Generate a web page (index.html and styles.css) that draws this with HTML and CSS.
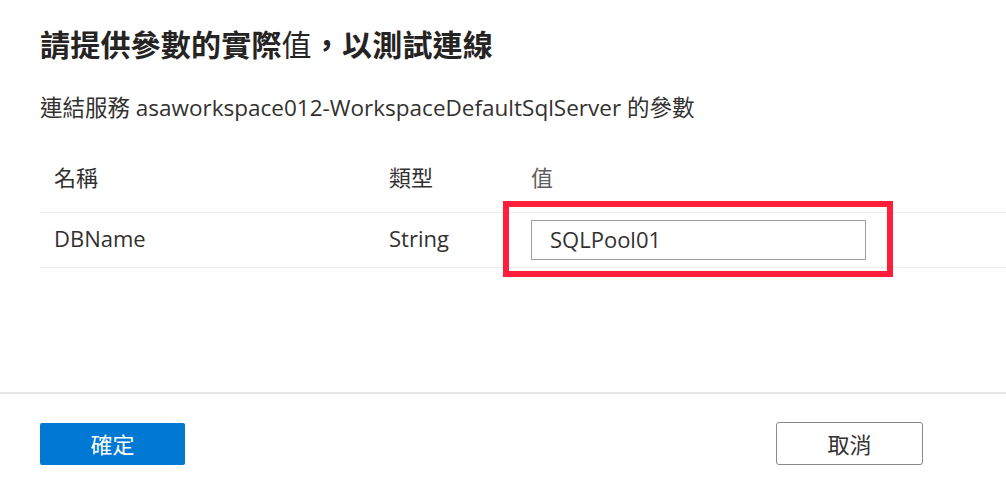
FILE: index.html
```html
<!DOCTYPE html>
<html lang="zh-Hant">
<head>
<meta charset="utf-8">
<title>參數</title>
<link rel="stylesheet" href="styles.css">
</head>
<body>
<div class="page">
  <main class="main">
    <h1 class="title">請提供參數的實際<span class="serif">值</span>，以測試連線</h1>
    <p class="subtitle">連結服務 asaworkspace012-WorkspaceDefaultSqlServer 的參數</p>
    <div class="table">
      <div class="row head">
        <div class="cell name">名稱</div>
        <div class="cell type">類型</div>
        <div class="cell value serif light">值</div>
      </div>
      <div class="row data">
        <div class="cell name text">DBName</div>
        <div class="cell type text">String</div>
        <div class="cell value"><div class="input">SQLPool01</div></div>
        <div class="highlight"></div>
      </div>
    </div>
  </main>
  <footer class="footer">
    <button class="btn primary">確定</button>
    <button class="btn secondary">取消</button>
  </footer>
</div>
</body>
</html>
```
FILE: styles.css
```css
html, body {
  margin: 0;
  padding: 0;
  background: #ffffff;
}
body {
  font-family: "Open Sans", "Noto Sans CJK TC", sans-serif;
  color: #323130;
}
.page {
  width: 1006px;
  height: 483px;
  display: flex;
  flex-direction: column;
  overflow: hidden;
}
.main {
  height: 392px;
  display: flex;
  flex-direction: column;
  padding: 23px 0 0 40px;
  box-sizing: border-box;
}
.title {
  margin: 0;
  font-family: "Noto Sans CJK TC", sans-serif;
  font-size: 30px;
  line-height: 40px;
  font-weight: 700;
  letter-spacing: 0.2px;
  color: #252423;
}
.title .serif {
  font-weight: 400;
}
.subtitle {
  margin: 30px 0 0 0;
  font-size: 22.5px;
  line-height: 30px;
  color: #323130;
}
.table {
  margin-top: 21px;
  display: flex;
  flex-direction: column;
}
.row {
  display: grid;
  grid-template-columns: 349px 142px 1fr;
  align-items: center;
  font-size: 22px;
}
.row.head {
  height: 68px;
  padding-bottom: 5px;
  box-sizing: border-box;
}
.row.data {
  position: relative;
  height: 56px;
  border-top: 1px solid #edebe9;
  border-bottom: 1px solid #edebe9;
  box-sizing: border-box;
}
.row.data .text {
  padding-bottom: 5px;
}
.cell.name {
  padding-left: 14px;
}
.light {
  color: #605e5c;
}
.input {
  width: 335px;
  height: 40px;
  box-sizing: border-box;
  border: 1px solid #a19f9d;
  padding-left: 18px;
  padding-bottom: 2px;
  display: flex;
  align-items: center;
  font-size: 22px;
  color: #323130;
}
.highlight {
  position: absolute;
  left: 463px;
  top: -12px;
  width: 390px;
  height: 76px;
  box-sizing: border-box;
  border: 6px solid #ff1f3a;
}
.footer {
  border-top: 2px solid #e6e6e6;
  display: flex;
  justify-content: space-between;
  align-items: flex-start;
  padding: 28px 83px 0 40px;
}
.btn {
  font-family: "Noto Sans CJK TC", sans-serif;
  font-size: 22px;
  box-sizing: border-box;
  cursor: pointer;
  display: flex;
  align-items: center;
  justify-content: center;
  padding: 0 0 2px 0;
}
.btn.primary {
  width: 145px;
  height: 42px;
  margin-top: 1px;
  background: #0078d4;
  color: #ffffff;
  border: none;
  border-radius: 2px;
}
.btn.secondary {
  width: 147px;
  height: 43px;
  background: #ffffff;
  color: #323130;
  border: 1.5px solid #8a8886;
  border-radius: 3px;
}
```
